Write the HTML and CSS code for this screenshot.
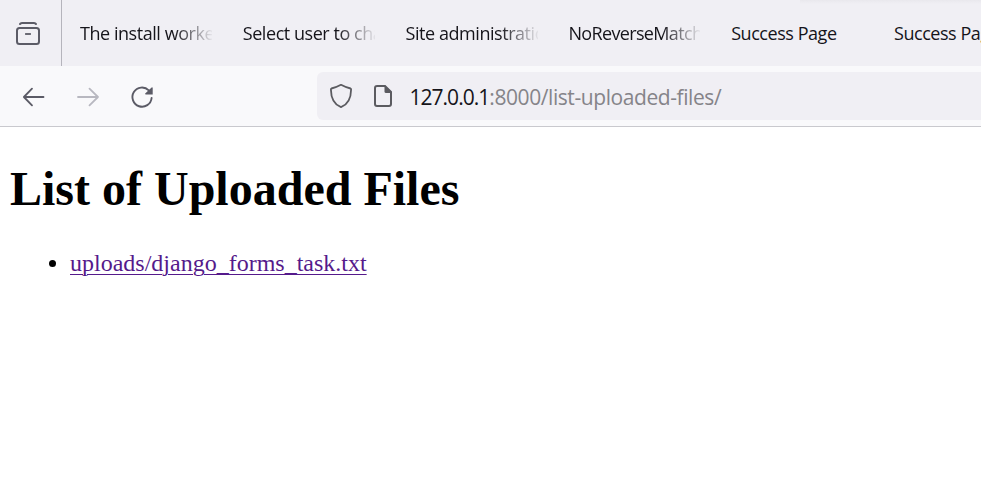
FILE: index.html
```html
<!DOCTYPE html>
<html lang="en">
<head>
<meta charset="utf-8">
<title>List of Uploaded Files</title>
<link rel="stylesheet" href="styles.css">
</head>
<body>
<header class="tabs">
  <div class="view">
    <svg width="26" height="26" viewBox="0 0 26 26" fill="none" stroke="#5b5b66" stroke-width="2" stroke-linecap="round"><path d="M5 4Q5.500 3 7 3H19Q20.500 3 21 4"/><rect x="2" y="8" width="22" height="16" rx="2.500"/><path d="M11 14h4" stroke-linecap="square" stroke-width="1.800"/></svg>
  </div>
  <div class="tab"><span>The install worker</span></div>
  <div class="tab"><span>Select user to change</span></div>
  <div class="tab"><span>Site administration</span></div>
  <div class="tab tight"><span>NoReverseMatch at</span></div>
  <div class="tab plain"><span>Success Page</span></div>
  <div class="tab plain"><span>Success Page</span></div>
</header>
<nav class="toolbar">
  <svg class="back" width="24" height="24" viewBox="0 0 24 24" fill="none" stroke="#5b5b66" stroke-width="1.800" stroke-linecap="round" stroke-linejoin="round"><path d="M21.500 12H2M10 3.700 1.900 12l8.100 8.300"/></svg>
  <svg class="forward" width="24" height="24" viewBox="0 0 24 24" fill="none" stroke="#b8b8c0" stroke-width="1.800" stroke-linecap="round" stroke-linejoin="round"><path d="M2 12h20M13.500 3.700 22 12l-8.500 8.300"/></svg>
  <svg class="reload" width="24" height="24" viewBox="0 0 24 24"><path d="M18.800 5.300A9.600 9.600 0 1 0 21.600 13" fill="none" stroke="#5b5b66" stroke-width="1.900" stroke-linecap="round"/><path d="M22.700 2.700V9.500H15.700q-1-.2-.5-.9l6.400-6.200q.8-.4 1.100.3z" fill="#5b5b66"/></svg>
  <div class="url">
    <svg class="shield" width="24" height="26" viewBox="0 0 24 26" fill="none" stroke="#5b5b60" stroke-width="1.800" stroke-linejoin="round"><path d="M12 1.800Q17 4.500 21.600 5.500Q22.200 5.700 22.100 6.500C22 15 19 21.500 12 24.200C5 21.500 2 15 1.900 6.500Q1.800 5.700 2.400 5.500Q7 4.500 12 1.800z"/></svg>
    <svg class="doc" width="20" height="24" viewBox="0 0 20 24"><path d="M3.500 2H12L18 8V20Q18 22 16 22H4Q2 22 2 20V4Q2 2 4 2z" fill="none" stroke="#5b5b60" stroke-width="2"/><path d="M12 1.500 18.500 8V9H13Q11.500 9 11.500 7.500V1.500z" fill="#5b5b60"/></svg>
    <p class="address"><span>127.0.0.1</span>:8000/list-uploaded-files/</p>
  </div>
</nav>
<main>
  <h1>List of Uploaded Files</h1>
  <ul><li><a href="#">uploads/django_forms_task.txt</a></li></ul>
</main>
</body>
</html>
```
FILE: styles.css
```css
* { box-sizing: border-box; }
body { margin: 0; width: 981px; height: 501px; overflow: hidden; background: #fff; font-family: "Open Sans", sans-serif; }
svg { display: block; flex: none; }
.tabs { display: flex; height: 66px; background: linear-gradient(#e9e8ed, #f0eff4) 800px 0 / 181px 4px no-repeat #f0eff4; overflow: hidden; }
.view { flex: none; width: 62px; padding: 20px 0 0 15px; border-right: 1px solid #b5b4bc; }
.tab { flex: none; width: 162.800px; padding-left: 18px; font-size: 18px; line-height: 66px; letter-spacing: -0.450px; color: #15141a; white-space: nowrap; }
.tab span { display: block; width: 132px; overflow: hidden; mask-image: linear-gradient(to right, #000 94px, transparent 134px); }
.tab.tight { letter-spacing: -0.650px; }
.tab.plain span { mask-image: none; }
.toolbar { display: flex; align-items: center; height: 61px; background: #f9f9fb; border-bottom: 1px solid #c9c9ce; }
.back { margin-left: 22px; }
.forward { margin-left: 30px; }
.reload { margin-left: 30px; }
.back, .forward, .reload { margin-top: 2px; }
.url { flex: 1; display: flex; align-items: center; height: 48px; margin-left: 163px; padding-left: 12px; background: #f0eff4; border-radius: 6px 0 0 6px; }
.doc { margin-left: 20px; }
.address { margin: 0 0 0 16.500px; padding-top: 2px; font-size: 21px; letter-spacing: -0.420px; line-height: 48px; color: #858489; white-space: nowrap; }
.address span { letter-spacing: -0.980px; color: #15141a; }
main { padding: 34px 10px 0; font-family: "Liberation Serif", serif; }
h1 { margin: 0; font-size: 48px; line-height: 55px; color: #000; }
ul { margin: 33px 0 0; padding-left: 60px; font-size: 24px; line-height: 28px; }
a { color: #551a8b; text-decoration-thickness: 1px; text-underline-offset: 3px; }
```
